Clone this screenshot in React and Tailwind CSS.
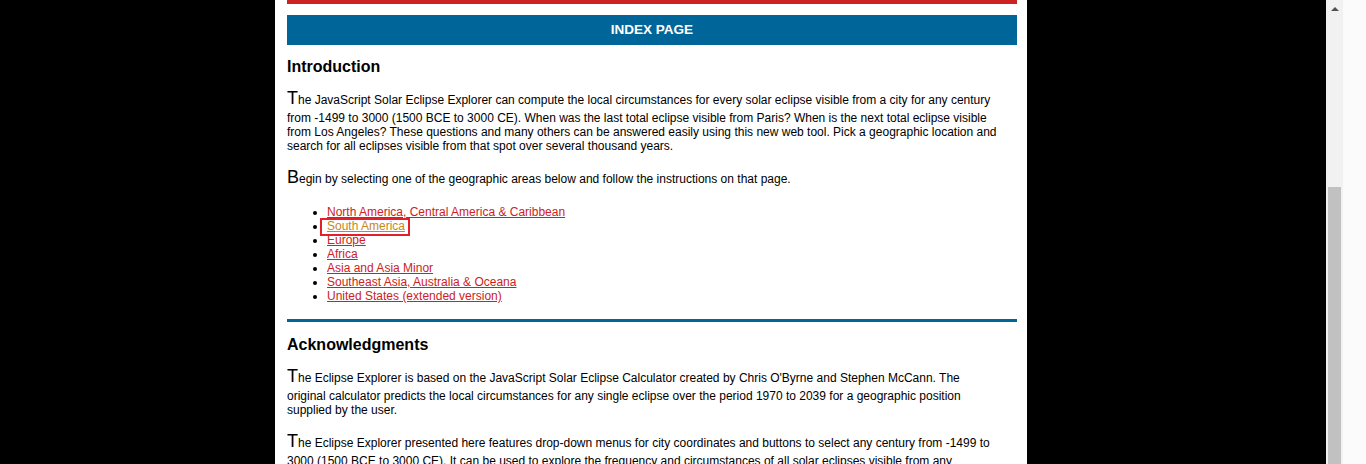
export default function App() {
  const links = [
    "North America, Central America & Caribbean",
    "South America",
    "Europe",
    "Africa",
    "Asia and Asia Minor",
    "Southeast Asia, Australia & Oceana",
    "United States (extended version)",
  ]

  return (
    <div className="flex h-[464px] w-[1366px] overflow-hidden bg-black font-['Liberation_Sans',Arial,sans-serif] text-black">
      <div className="w-[275px] shrink-0" />
      <div className="h-full w-[752px] shrink-0 bg-white pl-3 pr-[10px]">
        <div className="h-[4px] bg-[#cc2222]" />
        <div className="mt-[11px] flex h-[30px] items-center justify-center bg-[#006699] text-[13.5px] font-bold text-white">
          INDEX PAGE
        </div>

        <h2 className="mt-[12px] text-[16px] font-bold leading-[20px]">Introduction</h2>
        <p className="mt-[9px] w-[712px] text-[12px] leading-[14px]">
          <span className="text-[18px] leading-[25px]">T</span>he JavaScript Solar Eclipse Explorer can compute the local
          circumstances for every solar eclipse visible from a city for any century from -1499 to 3000 (1500 BCE to 3000
          CE). When was the last total eclipse visible from Paris? When is the next total eclipse visible from Los Angeles?
          These questions and many others can be answered easily using this new web tool. Pick a geographic location and
          search for all eclipses visible from that spot over several thousand years.
        </p>
        <p className="mt-[12px] w-[712px] text-[12px] leading-[14px]">
          <span className="text-[18px] leading-[25px]">B</span>egin by selecting one of the geographic areas below and
          follow the instructions on that page.
        </p>

        <ul className="mt-[15px] list-disc pl-[40px] text-[12px] leading-[14px]">
          {links.map((l, i) => (
            <li key={i}>
              {i === 1 ? (
                <a href="#" className="relative text-[#c8861a] underline">
                  {l}
                  <span className="absolute -bottom-[3px] -left-[7px] -right-[5px] -top-[1px] border-2 border-[#e3202a]" />
                </a>
              ) : (
                <a href="#" className="text-[#cc2222] underline">
                  {l}
                </a>
              )}
            </li>
          ))}
        </ul>

        <div className="mt-[16px] h-[3px] bg-[#006699]" />

        <h2 className="mt-[13px] text-[16px] font-bold leading-[20px]">Acknowledgments</h2>
        <p className="mt-[9px] w-[712px] text-[12px] leading-[14px]">
          <span className="text-[18px] leading-[25px]">T</span>he Eclipse Explorer is based on the JavaScript Solar
          Eclipse Calculator created by Chris O'Byrne and Stephen McCann. The original calculator predicts the local
          circumstances for any single eclipse over the period 1970 to 2039 for a geographic position supplied by the
          user.
        </p>
        <p className="mt-[12px] w-[712px] text-[12px] leading-[14px]">
          <span className="text-[18px] leading-[25px]">T</span>he Eclipse Explorer presented here features drop-down
          menus for city coordinates and buttons to select any century from -1499 to 3000 (1500 BCE to 3000 CE). It can
          be used to explore the frequency and circumstances of all solar eclipses visible from any location.
        </p>
      </div>
      <div className="w-[299px] shrink-0" />
      <div className="relative h-full w-[17px] shrink-0 bg-[#f1f1f1]">
        <div className="flex h-[17px] items-center justify-center">
          <div className="h-0 w-0 border-x-[4px] border-b-[4px] border-x-transparent border-b-[#505050]" />
        </div>
        <div className="absolute left-[2px] top-[187px] h-[277px] w-[13px] bg-[#c1c1c1]" />
      </div>
      <div className="h-full w-[23px] shrink-0 bg-[#fbfbfb]" />
    </div>
  )
}
